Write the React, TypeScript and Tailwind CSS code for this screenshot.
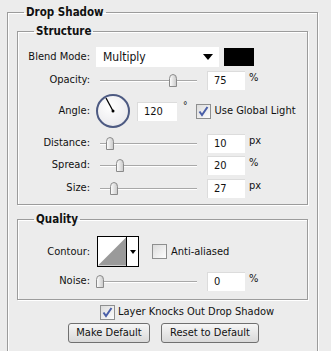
import React from "react";

const font = { fontFamily: "'DejaVu Sans Condensed', 'Liberation Sans', sans-serif" };

const Thumb = () => (
  <svg width="10" height="13" viewBox="0 0 10 13">
    <defs>
      <linearGradient id="thumbGrad" x1="0" y1="0" x2="1" y2="0">
        <stop offset="0" stopColor="#ffffff" />
        <stop offset="1" stopColor="#c8c8c8" />
      </linearGradient>
    </defs>
    <path d="M1.5 12.5 V4.5 Q1.5 0.5 5 0.5 Q8.5 0.5 8.5 4.5 V12.5 Z" fill="url(#thumbGrad)" stroke="#8a8a8a" />
  </svg>
);

const Slider = ({ pos }: { pos: number }) => (
  <div className="relative w-[103px] h-[20px]">
    <div className="absolute left-[3px] right-[3px] top-[10px] h-px bg-[#a8a8a8] shadow-[0_1px_0_#fff]" />
    <div className="absolute top-[4px]" style={{ left: pos - 5 }}>
      <Thumb />
    </div>
  </div>
);

const NumBox = ({ value, w = "w-[38px]" }: { value: string; w?: string }) => (
  <div className={`${w} h-[19px] bg-white border-t border-l border-[#dcdcdc] pl-[6px] flex items-center text-[11px]`}>
    {value}
  </div>
);

const Check = ({ checked }: { checked?: boolean }) => (
  <div className="w-[15px] h-[15px] border border-[#8e8f8f] bg-gradient-to-br from-[#dcdcdc] to-[#fdfdfd] flex items-center justify-center">
    {checked && (
      <svg width="11" height="11" viewBox="0 0 11 11">
        <path d="M1.5 5.5 L4 9 L9.5 1" fill="none" stroke="#4a5fa8" strokeWidth="2" />
      </svg>
    )}
  </div>
);

const Row = ({ label, children, className = "" }: { label: string; children: React.ReactNode; className?: string }) => (
  <div className={`flex items-center ${className}`}>
    <div className="w-[73px] text-right pr-[1px]">{label}</div>
    {children}
  </div>
);

const SliderRow = ({ label, pos, value, unit, className = "" }: { label: string; pos: number; value: string; unit: string; className?: string }) => (
  <Row label={label} className={`h-[20px] ${className}`}>
    <div className="ml-[6px]">
      <Slider pos={pos} />
    </div>
    <div className="ml-[7px]">
      <NumBox value={value} />
    </div>
    <span className="ml-[4px] -mt-[4px]">{unit}</span>
  </Row>
);

const boxCls =
  "border border-[#9c9c9c] shadow-[1px_1px_0_#fff,inset_1px_1px_0_#fff]";
const legendCls = "ml-[16px] px-[2px] font-bold text-[11.5px] leading-[14px]";

export default function App() {
  return (
    <div className="w-[331px] h-[351px] bg-[#ececec] overflow-hidden text-[11px] text-[#111] leading-[14px]" style={font}>
      <fieldset className={`mt-[5px] ml-[7px] w-[311px] h-[360px] ${boxCls}`}>
        <legend className={legendCls}>Drop Shadow</legend>

        <fieldset className={`mt-[5px] ml-[9px] w-[291px] pb-[6px] ${boxCls}`}>
          <legend className={legendCls}>Structure</legend>

          <Row label="Blend Mode:" className="h-[20px] mt-[9px]">
            <div className="ml-[5px] w-[123px] h-[20px] bg-white flex items-center justify-between pl-[7px] pr-[6px] text-[12px]">
              <span>Multiply</span>
              <svg width="10" height="6" viewBox="0 0 10 6">
                <path d="M0 0 H10 L5 6 Z" fill="#000" />
              </svg>
            </div>
            <div className="ml-[5px] w-[30px] h-[18px] bg-black" />
          </Row>

          <SliderRow label="Opacity:" pos={76} value="75" unit="%" className="mt-[3px]" />

          <Row label="Angle:" className="h-[34px] mt-[4px]">
            <div className="ml-[5px] w-[34px] h-[34px] rounded-full border-2 border-[#4d5a82] bg-[radial-gradient(circle_at_40%_35%,#ffffff,#e4e4e8)] relative">
              <svg className="absolute left-0 top-0" width="30" height="30" viewBox="0 0 30 30">
                <line x1="15" y1="15" x2="8" y2="2" stroke="#000" strokeWidth="1.3" />
                <circle cx="15" cy="15" r="1.5" fill="#000" />
              </svg>
            </div>
            <div className="ml-[7px]">
              <NumBox value="120" w="w-[40px]" />
            </div>
            <span className="ml-[6px] -mt-[10px] text-[10px]">°</span>
            <div className="ml-[8px]">
              <Check checked />
            </div>
            <span className="ml-[4px]">Use Global Light</span>
          </Row>

          <SliderRow label="Distance:" pos={13} value="10" unit="px" className="mt-[5px]" />
          <SliderRow label="Spread:" pos={23} value="20" unit="%" className="mt-[2px]" />
          <SliderRow label="Size:" pos={17} value="27" unit="px" className="mt-[3px]" />
        </fieldset>

        <fieldset className={`mt-[7px] ml-[9px] w-[291px] pb-[8px] ${boxCls}`}>
          <legend className={legendCls}>Quality</legend>

          <Row label="Contour:" className="h-[31px] mt-[10px]">
            <div className="ml-[6px] w-[42px] h-[31px] border border-black bg-white flex">
              <svg width="29" height="29" viewBox="0 0 29 29" className="border-r border-black">
                <path d="M0 29 L29 0 V29 Z" fill="#9a9a9a" />
              </svg>
              <div className="flex-1 flex items-center justify-center">
                <svg width="6" height="4" viewBox="0 0 6 4">
                  <path d="M0 0 H6 L3 4 Z" fill="#000" />
                </svg>
              </div>
            </div>
            <div className="ml-[13px]">
              <Check />
            </div>
            <span className="ml-[4px]">Anti-aliased</span>
          </Row>

          <SliderRow label="Noise:" pos={3} value="0" unit="%" className="mt-[4px]" />
        </fieldset>

        <div className="mt-[4px] h-[16px] flex items-center pl-[92px]">
          <Check checked />
          <span className="ml-[3px]">Layer Knocks Out Drop Shadow</span>
        </div>

        <div className="mt-[3px] flex pl-[60px] gap-[11px]">
          <button className="w-[82px] h-[20px] rounded-[3px] border border-[#707070] bg-gradient-to-b from-[#f6f6f6] to-[#d9d9d9] text-[11px]">
            Make Default
          </button>
          <button className="w-[98px] h-[20px] rounded-[3px] border border-[#707070] bg-gradient-to-b from-[#f6f6f6] to-[#d9d9d9] text-[11px]">
            Reset to Default
          </button>
        </div>
      </fieldset>
    </div>
  );
}
